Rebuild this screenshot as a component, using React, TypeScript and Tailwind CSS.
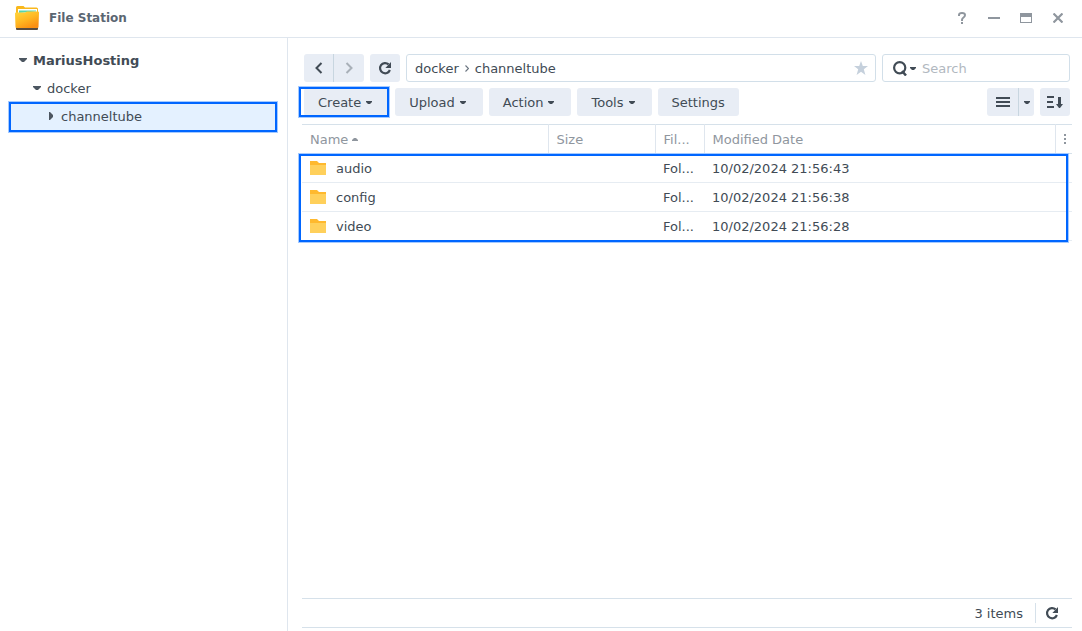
import { type ReactNode } from "react";

const folders = [
  { name: "audio", modified: "10/02/2024 21:56:43" },
  { name: "config", modified: "10/02/2024 21:56:38" },
  { name: "video", modified: "10/02/2024 21:56:28" },
];

const menus = ["Upload", "Action", "Tools"];

function Caret({ className = "text-[#414b55]" }: { className?: string }) {
  return (
    <svg className={className} width="6" height="3" viewBox="0 0 6 3" fill="currentColor" aria-hidden="true">
      <path d="M0 0h6v1L4 3H2L0 1z" />
    </svg>
  );
}

function TreeArrow() {
  return (
    <svg width="8" height="4" viewBox="0 0 8 4" fill="#4c5661" aria-hidden="true">
      <path d="M0 0h8v1L5 4H3L0 1z" />
    </svg>
  );
}

function ReloadIcon() {
  return (
    <svg width="14" height="14" viewBox="0 0 14 14" fill="none" aria-hidden="true">
      <path d="M11.9 9A5.100 5.100 0 1 1 10.600 3.400" stroke="currentColor" strokeWidth="2.200" />
      <path d="M13 1v6H7.400z" fill="currentColor" />
    </svg>
  );
}

function FileStationLogo() {
  return (
    <svg width="24" height="24" viewBox="0 0 24 24" aria-hidden="true">
      <defs>
        <linearGradient id="front" x1="0" y1="0" x2="0.6" y2="1">
          <stop offset="0" stopColor="#ffd83f" />
          <stop offset="0.55" stopColor="#ffb822" />
          <stop offset="1" stopColor="#fc9011" />
        </linearGradient>
      </defs>
      <path d="M1 1.500Q1 0 2.500 0h6L10 1.500h11.500Q23 1.500 23 3v6H1z" fill="#f9b81d" />
      <path d="M3 3h19v5H3z" fill="#fff" />
      <path d="M4 4.500h17v1L4 7z" fill="#55d5ae" />
      <path d="M1 20h22v3q0 1-1 1H2q-1 0-1-1z" fill="#594c3f" />
      <path d="M0 7.500q0-1 1-1h9L12 5.500h11q1 0 1 1l-.5 14.500q0 1-1 1h-21q-1 0-1-1z" fill="url(#front)" />
    </svg>
  );
}

function FolderIcon() {
  return (
    <svg width="16" height="14" viewBox="0 0 16 14" aria-hidden="true">
      <path d="M0 0h7l2 2h7v3H0z" fill="#ffb92e" />
      <path d="M0 4h16v10H0z" fill="#ffd05b" />
    </svg>
  );
}

function Highlight({ className }: { className: string }) {
  return (
    <span
      className={`pointer-events-none absolute border-2 border-[#0066ff] ring-1 ring-[#a5caff] ${className}`}
    />
  );
}

function ToolButton({ children, className = "pr-[17px] pl-3.5" }: { children: ReactNode; className?: string }) {
  return (
    <button className={`flex h-7 items-center gap-[5px] rounded-[3px] bg-[#e8edf5] ${className}`}>
      {children}
    </button>
  );
}

function TitleBar() {
  return (
    <header className="flex h-[38px] shrink-0 items-center justify-between border-b border-[#dfe6ee] pr-[18px] pb-0.5 pl-[15px]">
      <div className="flex items-center gap-2.5">
        <FileStationLogo />
        <h1 className="text-xs font-bold text-[#5b6672]">File Station</h1>
      </div>
      <div className="flex items-center gap-5 text-[#8f969e]">
        <button aria-label="Help" className="flex size-3 items-center justify-center">
          <svg width="8" height="12" viewBox="0 0 8 12" fill="none" stroke="currentColor" strokeWidth="2">
            <path d="M1 4V3q0-2 3-2t3 2q0 1.500-1.500 2.500T4 8v1M4 10v2" />
          </svg>
        </button>
        <button aria-label="Minimize" className="flex size-3 items-center justify-center">
          <svg width="12" height="2" viewBox="0 0 12 2" fill="currentColor">
            <path d="M0 0h12v2H0z" />
          </svg>
        </button>
        <button aria-label="Maximize" className="flex size-3 items-center justify-center">
          <svg width="12" height="10" viewBox="0 0 12 10" fill="currentColor" fillRule="evenodd">
            <path d="M0 0h12v10H0zM1 4v5h10V4z" />
          </svg>
        </button>
        <button aria-label="Close" className="flex size-3 items-center justify-center">
          <svg width="10" height="10" viewBox="0 0 10 10" stroke="currentColor" strokeWidth="2.200">
            <path d="M.5.5l9 9M9.500.5l-9 9" />
          </svg>
        </button>
      </div>
    </header>
  );
}

function Sidebar() {
  return (
    <nav className="w-72 shrink-0 border-r border-[#dfe6ee] px-2.5 pt-2">
      <a href="#root" className="flex h-7 items-center gap-1.5 pl-[9px] font-bold">
        <TreeArrow />
        MariusHosting
      </a>
      <a href="#docker" className="flex h-7 items-center gap-1.5 pl-[23px]">
        <TreeArrow />
        docker
      </a>
      <a href="#channeltube" className="relative flex h-7 items-center gap-2 bg-[#e4f1ff] pl-[39px]">
        <svg width="4" height="8" viewBox="0 0 4 8" fill="#4c5661" aria-hidden="true">
          <path d="M0 0h1l3 3v2L1 8H0z" />
        </svg>
        channeltube
        <Highlight className="top-0 right-0 -bottom-0.5 -left-px" />
      </a>
    </nav>
  );
}

function PathBar() {
  return (
    <div className="flex gap-1.5">
      <div className="flex">
        <button aria-label="Back" className="flex h-7 w-[30px] items-center justify-center rounded-l-[3px] border-r border-[#c8d6e0] bg-[#e8edf5]">
          <svg width="8" height="12" viewBox="0 0 8 12" fill="none" stroke="currentColor" strokeWidth="2">
            <path d="M6.500 1l-5 5 5 5" />
          </svg>
        </button>
        <button aria-label="Forward" className="flex h-7 w-[30px] items-center justify-center rounded-r-[3px] bg-[#e8edf5] text-[#a9b0b8]">
          <svg width="8" height="12" viewBox="0 0 8 12" fill="none" stroke="currentColor" strokeWidth="2">
            <path d="M1.500 1l5 5-5 5" />
          </svg>
        </button>
      </div>
      <button aria-label="Refresh" className="flex h-7 w-[30px] items-center justify-center rounded-[3px] bg-[#e8edf5]">
        <ReloadIcon />
      </button>
      <div className="flex h-7 flex-1 items-center gap-1.5 rounded-[3px] border border-[#d2dfe9] pr-[7px] pl-2">
        <a href="#docker">docker</a>
        <svg width="4" height="7" viewBox="0 0 4 7" fill="none" stroke="#6b7580" strokeWidth="1.200" aria-hidden="true">
          <path d="M.5.5l3 3-3 3" />
        </svg>
        <a href="#channeltube">channeltube</a>
        <button aria-label="Add to favorites" className="ml-auto text-[#c5d0dc]">
          <svg width="14" height="14" viewBox="0 0 14 14" fill="currentColor">
            <path d="M7 0l1.800 5H14L9.800 8.300 11.400 14 7 10.700 2.600 14l1.600-5.700L0 5h5.200z" />
          </svg>
        </button>
      </div>
      <label className="flex h-7 w-[188px] items-center gap-[3px] rounded-[3px] border border-[#d2dfe9] pr-2 pl-2.5">
        <svg className="shrink-0" width="14" height="15" viewBox="0 0 14 15" fill="none" stroke="currentColor">
          <circle cx="6.700" cy="6.700" r="5.600" strokeWidth="2.200" />
          <path d="M9 10l4 4.500" strokeWidth="2.500" />
        </svg>
        <Caret className="shrink-0 text-[#414b55]" />
        <input
          type="text"
          aria-label="Search"
          placeholder="Search"
          className="ml-[3px] w-full min-w-0 outline-none placeholder:text-[#b1b8c0]"
        />
      </label>
    </div>
  );
}

function ActionBar() {
  return (
    <div className="mt-1.5 flex justify-between">
      <div className="flex gap-1.5">
        <div className="relative">
          <ToolButton>
            Create <Caret />
          </ToolButton>
          <Highlight className="-inset-y-px right-0 -left-[5px]" />
        </div>
        {menus.map((menu) => (
          <ToolButton key={menu}>
            {menu} <Caret />
          </ToolButton>
        ))}
        <ToolButton className="px-3.5">Settings</ToolButton>
      </div>
      <div className="flex gap-1.5">
        <div className="flex">
          <button aria-label="List view" className="flex h-7 w-8 items-center justify-center rounded-l-[3px] border-r border-[#c8d6e0] bg-[#e8edf5]">
            <svg width="14" height="10" viewBox="0 0 14 10" fill="currentColor">
              <path d="M0 0h14v2H0zM0 4h14v2H0zM0 8h14v2H0z" />
            </svg>
          </button>
          <button aria-label="View options" className="flex h-7 w-[15px] items-center justify-center rounded-r-[3px] bg-[#e8edf5]">
            <Caret />
          </button>
        </div>
        <button aria-label="Sort" className="flex h-7 w-[30px] items-center justify-center rounded-[3px] bg-[#e8edf5]">
          <svg width="16" height="12" viewBox="0 0 16 12" fill="currentColor">
            <path d="M0 0h7v2H0zM0 5h6v2H0zM0 10h7v2H0zM11 1h3v7h2l-3 4h-1L9 8h2z" />
          </svg>
        </button>
      </div>
    </div>
  );
}

function FileTable() {
  return (
    <div className="relative">
      <table className="w-full table-fixed border-collapse text-left">
        <colgroup>
          <col className="w-[246px]" />
          <col className="w-[107px]" />
          <col className="w-[49px]" />
          <col />
          <col className="w-[17px]" />
        </colgroup>
        <thead className="text-[#8f969e]">
          <tr className="h-[29px] border-y border-[#d6e1ea] [&>th]:border-r [&>th]:border-[#dfe6ee] [&>th]:p-0 [&>th]:pl-2 [&>th]:font-normal">
            <th>
              <div className="flex items-center gap-1">
                Name
                <Caret className="rotate-180 text-[#8f969e]" />
              </div>
            </th>
            <th>Size</th>
            <th className="truncate">Fil...</th>
            <th>Modified Date</th>
            <th className="border-r-0!">
              <button aria-label="Columns" className="flex">
                <svg width="2" height="10" viewBox="0 0 2 10" fill="currentColor">
                  <path d="M0 0h2v2H0zM0 4h2v2H0zM0 8h2v2H0z" />
                </svg>
              </button>
            </th>
          </tr>
        </thead>
        <tbody>
          {folders.map((folder) => (
            <tr key={folder.name} className="h-[29px] border-b border-[#e6ecf2] [&>td]:p-0 [&>td]:pl-2">
              <td>
                <div className="flex items-center gap-2.5">
                  <FolderIcon />
                  {folder.name}
                </div>
              </td>
              <td />
              <td>Fol...</td>
              <td colSpan={2}>{folder.modified}</td>
            </tr>
          ))}
        </tbody>
      </table>
      <Highlight className="top-[30px] right-1 -bottom-px -left-[3px]" />
    </div>
  );
}

function App() {
  return (
    <div className="flex min-h-screen flex-col bg-white font-['DejaVu_Sans',Verdana,sans-serif] text-[13px] leading-[21px] text-[#414b55]">
      <TitleBar />
      <div className="flex flex-1">
        <Sidebar />
        <main className="flex min-w-0 flex-1 flex-col pt-4 pr-2.5 pb-[3px] pl-3.5">
          <div className="px-0.5">
            <PathBar />
            <ActionBar />
          </div>
          <div className="mt-2">
            <FileTable />
          </div>
          <footer className="mt-auto flex h-[30px] items-center justify-end gap-3 border-y border-[#d6e1ea] pr-[13px]">
            <span>3 items</span>
            <button aria-label="Reload" className="flex h-5 items-center border-l border-[#d6e1ea] pl-[9px]">
              <ReloadIcon />
            </button>
          </footer>
        </main>
      </div>
    </div>
  );
}

export default App;
